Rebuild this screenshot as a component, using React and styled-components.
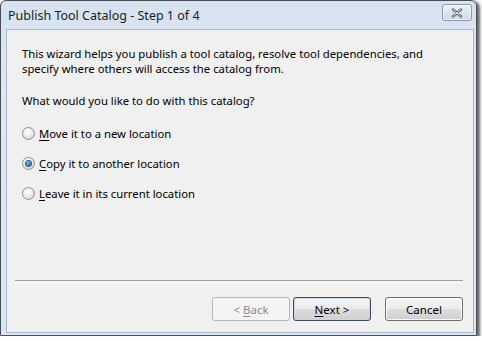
import React from "react";
import styled, { createGlobalStyle } from "styled-components";

const Global = createGlobalStyle`
  html, body { margin: 0; padding: 0; background: #ffffff; }
  body { font-family: "Noto Sans", "Open Sans", sans-serif; font-size: 11.3px; color: #000; }
`;

const Window = styled.div`
  box-sizing: border-box;
  width: 477px;
  height: 336px;
  border: 1px solid #4a4f55;
  border-radius: 6px 6px 0 0;
  background: linear-gradient(180deg, #d6e2f0 0%, #dfe9f5 30%, #d9e5f2 100%);
  box-shadow: 2px 2px 3px 1px rgba(0, 0, 0, 0.6);
  display: flex;
  flex-direction: column;
`;

const TitleBar = styled.div`
  height: 28px;
  display: flex;
  align-items: center;
  justify-content: space-between;
  padding: 0 4px 0 7px;
`;

const Title = styled.span`
  font-size: 12.5px;
  color: #1c1c1c;
  margin-top: 1px;
`;

const CloseButton = styled.div`
  box-sizing: border-box;
  width: 30px;
  height: 17px;
  margin-top: -5px;
  border: 1px solid #8a98aa;
  border-radius: 3px;
  background: linear-gradient(180deg, #eef2f7 0%, #dde4ee 50%, #cfd8e4 100%);
  display: flex;
  align-items: center;
  justify-content: center;
  box-shadow: inset 0 0 0 1px rgba(255, 255, 255, 0.6);
`;

const Client = styled.div`
  flex: 1;
  margin: 0 2px 2px 5px;
  border: 1px solid #a7b9cf;
  background: #f0f0f0;
  display: flex;
  flex-direction: column;
  padding: 16px 10px 11px 0;
`;

const Body = styled.div`
  padding-left: 15px;
  display: flex;
  flex-direction: column;
  line-height: 15px;
`;

const Paragraph = styled.p`
  margin: 0;
  width: 430px;
`;

const Question = styled.p`
  margin: 17px 0 0 0;
`;

const RadioList = styled.div`
  margin-top: 17px;
  display: flex;
  flex-direction: column;
  gap: 14px;
`;

const RadioRow = styled.label`
  display: flex;
  align-items: center;
  height: 16px;
  gap: 4px;
`;

const RadioCircle = styled.span`
  box-sizing: border-box;
  width: 13px;
  height: 13px;
  border-radius: 50%;
  border: 1px solid #8e8f8f;
  background: radial-gradient(circle at 40% 35%, #ffffff 0%, #ececec 45%, #c9c9c9 100%);
  display: flex;
  align-items: center;
  justify-content: center;
`;

const RadioDot = styled.span`
  width: 5px;
  height: 5px;
  border-radius: 50%;
  background: radial-gradient(circle at 40% 35%, #7fc6ef 0%, #1f73b6 60%, #0d3f74 100%);
  box-shadow: 0 0 0 1px #2a5b87;
`;

const Mn = styled.span`
  text-decoration: underline;
  text-underline-offset: 2px;
`;

const Footer = styled.div`
  margin-top: auto;
  display: flex;
  flex-direction: column;
`;

const Separator = styled.div`
  margin-left: 8px;
  height: 1px;
  border-top: 1px solid #a0a0a0;
  border-bottom: 1px solid #ffffff;
`;

const ButtonRow = styled.div`
  margin-top: 14px;
  display: flex;
  justify-content: flex-end;
  gap: 3px;
`;

const Button = styled.div`
  box-sizing: border-box;
  width: 78px;
  height: 24px;
  border-radius: 3px;
  display: flex;
  align-items: center;
  justify-content: center;
  font-size: 11.5px;
  margin-left: ${(p) => (p.$wide ? "11px" : "0")};
  color: ${(p) => (p.$disabled ? "#8a8a8a" : "#000")};
  border: 1px solid ${(p) => (p.$disabled ? "#b5b8bb" : p.$default ? "#3c4a59" : "#707070")};
  background: ${(p) =>
    p.$disabled
      ? "#f4f4f4"
      : "linear-gradient(180deg, #f6f6f6 0%, #ebebeb 48%, #dddddd 52%, #cfcfcf 100%)"};
  box-shadow: ${(p) =>
    p.$default ? "inset 0 0 0 1px #c9d6e4" : p.$disabled ? "none" : "inset 0 0 0 1px #fcfcfc"};
`;

export default function App() {
  return (
    <>
      <Global />
      <Window>
        <TitleBar>
          <Title>Publish Tool Catalog - Step 1 of 4</Title>
          <CloseButton>
            <svg width="12" height="10" viewBox="0 0 12 10">
              <path
                d="M2 1.5 L10 8.5 M10 1.5 L2 8.5"
                stroke="#5a6170"
                strokeWidth="2.4"
                strokeLinecap="round"
              />
              <path
                d="M2 1.5 L10 8.5 M10 1.5 L2 8.5"
                stroke="#e9edf2"
                strokeWidth="0.9"
                strokeLinecap="round"
              />
            </svg>
          </CloseButton>
        </TitleBar>
        <Client>
          <Body>
            <Paragraph>
              This wizard helps you publish a tool catalog, resolve tool dependencies, and
              specify where others will access the catalog from.
            </Paragraph>
            <Question>What would you like to do with this catalog?</Question>
            <RadioList>
              <RadioRow>
                <RadioCircle />
                <span>
                  <Mn>M</Mn>ove it to a new location
                </span>
              </RadioRow>
              <RadioRow>
                <RadioCircle>
                  <RadioDot />
                </RadioCircle>
                <span>
                  <Mn>C</Mn>opy it to another location
                </span>
              </RadioRow>
              <RadioRow>
                <RadioCircle />
                <span>
                  <Mn>L</Mn>eave it in its current location
                </span>
              </RadioRow>
            </RadioList>
          </Body>
          <Footer>
            <Separator />
            <ButtonRow>
              <Button $disabled>
                <span>
                  &lt; <Mn>B</Mn>ack
                </span>
              </Button>
              <Button $default>
                <span>
                  <Mn>N</Mn>ext &gt;
                </span>
              </Button>
              <Button $wide>Cancel</Button>
            </ButtonRow>
          </Footer>
        </Client>
      </Window>
    </>
  );
}
